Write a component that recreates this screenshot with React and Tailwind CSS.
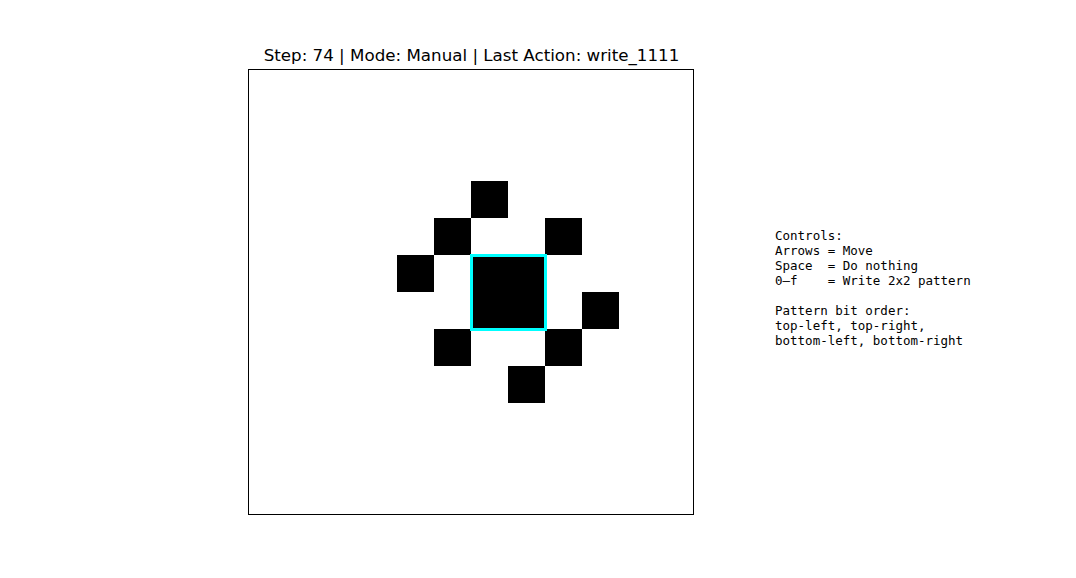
const SIZE = 12;

// filled cells as [row, col]
const filled = [
  [3, 6],
  [4, 5], [4, 8],
  [5, 4], [5, 6], [5, 7],
  [6, 6], [6, 7], [6, 9],
  [7, 5], [7, 8],
  [8, 7],
];

const isFilled = (r, c) => filled.some(([fr, fc]) => fr === r && fc === c);

const controls = `Controls:
Arrows = Move
Space  = Do nothing
0–f    = Write 2x2 pattern

Pattern bit order:
top-left, top-right,
bottom-left, bottom-right`;

export default function App() {
  const cells = [];
  for (let r = 0; r < SIZE; r++) {
    for (let c = 0; c < SIZE; c++) {
      cells.push(
        <div key={`${r}-${c}`} className={isFilled(r, c) ? 'bg-black' : 'bg-white'} />
      );
    }
  }

  return (
    <div className="w-[1076px] h-[578px] bg-white flex overflow-hidden">
      {/* Plot */}
      <div className="ml-[248px] pt-[45px] w-[446px] flex flex-col">
        <div
          className="h-[20px] leading-[20px] text-[16.7px] text-black text-center whitespace-nowrap mb-[4px] pl-[1px]"
          style={{ fontFamily: '"DejaVu Sans", sans-serif' }}
        >
          Step: 74 | Mode: Manual | Last Action: write_1111
        </div>
        <div className="w-[446px] h-[446px] border border-black">
          <div className="relative w-[444px] h-[444px] grid grid-cols-[repeat(12,37px)] grid-rows-[repeat(12,37px)]">
            {cells}
            {/* cursor */}
            <div className="absolute left-[220.5px] top-[183.5px] w-[77px] h-[77px] border-[3px] border-[#00ffff]" />
          </div>
        </div>
      </div>

      {/* Controls */}
      <div
        className="ml-[81px] pt-[228px] text-[12.5px] leading-[15px] text-black whitespace-pre"
        style={{ fontFamily: '"DejaVu Sans Mono", monospace' }}
      >
        {controls}
      </div>
    </div>
  );
}
